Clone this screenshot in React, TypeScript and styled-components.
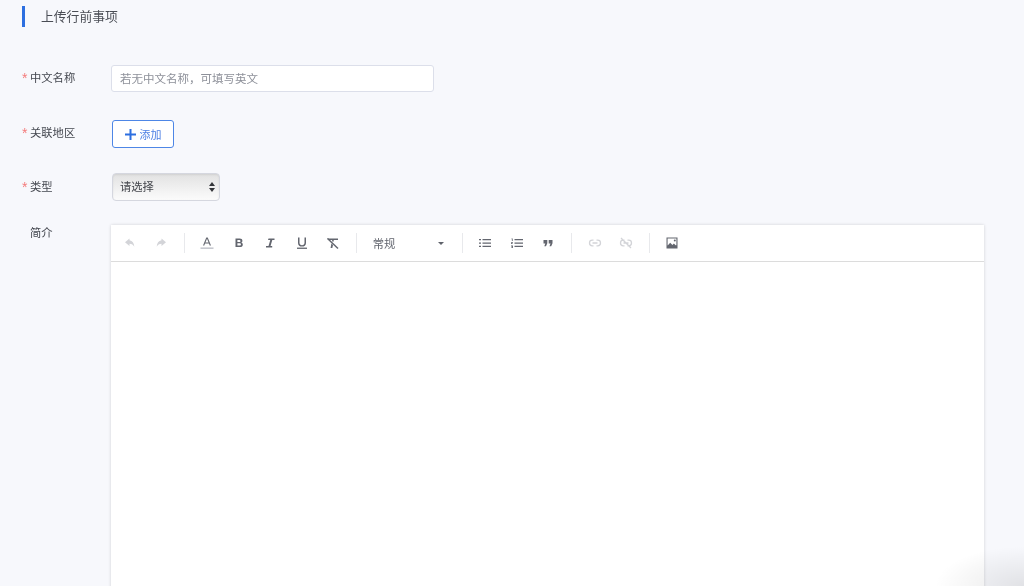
import styled, { createGlobalStyle } from "styled-components";
import { ReactNode } from "react";

const GlobalStyle = createGlobalStyle`
  html, body {
    margin: 0;
    padding: 0;
    height: 100%;
    background: #f7f8fc;
    overflow: hidden;
  }
  body, input, select, button {
    font-family: "Liberation Sans", "Noto Sans CJK SC", sans-serif;
  }
`;

const Page = styled.div`
  position: relative;
  width: 1024px;
  height: 586px;
  box-sizing: border-box;
  padding: 6px 40px 0 22px;
  background: #f7f8fc;
  overflow: hidden;
  filter: blur(0.35px);
`;

const SectionTitle = styled.h2`
  margin: 0 0 38px;
  height: 21px;
  border-left: 3px solid #2d6fe0;
  padding-left: 16px;
  font-size: 12.8px;
  font-weight: 400;
  line-height: 22px;
  color: #4a4d55;
`;

const Row = styled.div<{ $height: number; $mb: number; $lift?: number }>`
  display: flex;
  align-items: center;
  height: ${(p) => p.$height}px;
  margin-bottom: ${(p) => p.$mb}px;
  label {
    padding-bottom: ${(p) => p.$lift ?? 0}px;
  }
`;

const Label = styled.label`
  width: 89px;
  flex-shrink: 0;
  font-size: 11.3px;
  line-height: 16px;
  color: #44474f;
  white-space: nowrap;
`;

const Star = styled.span`
  display: inline-block;
  width: 8px;
  font-size: 14px;
  line-height: 10px;
  vertical-align: -1px;
  color: #f47a7a;
`;

const TextInput = styled.input`
  box-sizing: border-box;
  width: 323px;
  height: 27px;
  padding: 0 8px;
  background: #fff;
  border: 1px solid #dcdfea;
  border-radius: 3px;
  font-size: 11.5px;
  outline: none;
  &::placeholder {
    color: #8d9099;
    opacity: 1;
  }
`;

const AddButton = styled.button`
  display: flex;
  align-items: center;
  justify-content: center;
  gap: 4px;
  box-sizing: border-box;
  width: 62px;
  height: 28px;
  margin-left: 1px;
  padding: 0;
  background: #fff;
  border: 1px solid #4d86e6;
  border-radius: 3px;
  color: #4d80e4;
  font-size: 11px;
`;

const SelectWrap = styled.div`
  position: relative;
  width: 108px;
  height: 28px;
  margin-left: 1px;
`;

const NativeSelect = styled.select`
  appearance: none;
  box-sizing: border-box;
  width: 100%;
  height: 100%;
  padding: 0 7px;
  border: 1px solid #d5d7df;
  border-radius: 4px;
  background: linear-gradient(#e2e2e2, #f4f4f4 70%, #fbfbfb);
  box-shadow: inset 0 1px 2px rgba(0, 0, 0, 0.08);
  color: #44464c;
  font-size: 11.3px;
`;

const SelectArrows = styled.svg`
  position: absolute;
  top: 9px;
  right: 5px;
  pointer-events: none;
`;

const EditorRow = styled.div`
  display: flex;
  align-items: flex-start;
`;

const EditorLabel = styled(Label)`
  padding-left: 8px;
  width: 81px;
`;

const Editor = styled.div`
  flex: 1;
  height: 400px;
  background: #fff;
  box-shadow: 0 0 3px rgba(0, 0, 0, 0.16);
`;

const Toolbar = styled.div`
  display: flex;
  align-items: center;
  box-sizing: border-box;
  height: 37px;
  padding-left: 3px;
  border-bottom: 1px solid #dcdcdc;
`;

const ToolButton = styled.button<{ $muted?: boolean }>`
  display: flex;
  align-items: center;
  justify-content: center;
  width: 31.4px;
  height: 30px;
  padding: 0;
  border: 0;
  background: none;
  color: ${(p) => (p.$muted ? "#d3d4d8" : "#63666f")};
`;

const Separator = styled.span`
  width: 1px;
  height: 20px;
  margin: 0 7px;
  background: #e8e9ec;
`;

const HeadingSelect = styled.div`
  display: flex;
  align-items: center;
  justify-content: space-between;
  box-sizing: border-box;
  width: 91px;
  padding: 0 11px 0 9px;
  font-size: 11.3px;
  color: #63666f;
`;

const Caret = styled.span`
  width: 0;
  height: 0;
  border-left: 3px solid transparent;
  border-right: 3px solid transparent;
  border-top: 3px solid #5f626b;
`;

const CornerShade = styled.div`
  position: absolute;
  right: 0;
  bottom: 0;
  width: 90px;
  height: 40px;
  pointer-events: none;
  background: radial-gradient(ellipse at 100% 100%, rgba(0, 0, 0, 0.09), rgba(0, 0, 0, 0) 70%);
`;

const Icon = ({ children }: { children: ReactNode }) => (
  <svg width="14" height="14" viewBox="0 0 14 14" fill="currentColor">
    {children}
  </svg>
);

const UndoIcon = () => (
  <Icon>
    <path d="M6.500 2.500 2 6.300l4.500 3.800V7.700c2.300 0 3.700.9 4.800 3-.2-3.500-1.900-6-4.800-6.400z" />
  </Icon>
);
const RedoIcon = () => (
  <Icon>
    <path d="M7.500 2.500 12 6.300l-4.500 3.800V7.700c-2.300 0-3.700.9-4.800 3 .2-3.500 1.900-6 4.800-6.400z" />
  </Icon>
);
const ColorIcon = () => (
  <Icon>
    <path d="M6.300 1.500h1.400L11 9.500H9.700L9 7.600H5L4.300 9.500H3zM5.400 6.500h3.200L7 2.800z" />
    <rect x="0.500" y="11.500" width="13" height="1.300" fill="#b9bbc4" />
  </Icon>
);
const BoldIcon = () => (
  <Icon>
    <path
      fillRule="evenodd"
      d="M3.500 2.500h4.200c1.700 0 2.700.9 2.700 2.200 0 .9-.5 1.600-1.200 1.900 1 .3 1.600 1 1.600 2.100 0 1.500-1.100 2.300-2.900 2.300H3.500zM5.400 4v1.900h2c.7 0 1.100-.4 1.100-1s-.4-.9-1.100-.9zM5.400 7.300V9.500h2.300c.8 0 1.200-.4 1.200-1.100s-.4-1.100-1.200-1.100z"
    />
  </Icon>
);
const ItalicIcon = () => (
  <Icon>
    <path d="M5.500 2.500h6v1.600H9.300L7.500 9.900h1.700v1.600H3V9.900h2.500l1.800-5.800H5z" />
  </Icon>
);
const UnderlineIcon = () => (
  <Icon>
    <path d="M3 1.500h1.500v5.300c0 1.600 1 2.400 2.500 2.400s2.500-.8 2.500-2.400V1.500H11v5.400c0 2.400-1.600 3.700-4 3.700s-4-1.300-4-3.700z" />
    <rect x="2" y="11.600" width="10" height="1.300" />
  </Icon>
);
const ClearIcon = () => (
  <Icon>
    <path d="M1 2.500h11V4H7.900l-.7 2L6 4.900 6.300 4H3z" />
    <path d="M2 2 12.500 12l-1 1L1 3z" />
    <path d="M5.400 7.500 7 9l-.7 3H4.600z" />
  </Icon>
);
const BulletIcon = () => (
  <Icon>
    <path d="M1 3h2v1.300H1zM4.500 3H13v1.300H4.500zM1 6.400h2v1.300H1zM4.500 6.400H13v1.300H4.500zM1 9.800h2v1.300H1zM4.500 9.800H13v1.300H4.500z" />
  </Icon>
);
const NumberIcon = () => (
  <Icon>
    <path d="M1.500 2.500h1.200v2.500H1.900V3.300h-.4zM4.500 3H13v1.300H4.500zM1 6.200h2v.8H1.800v.4H3v.6H1zM4.500 6.400H13v1.300H4.500zM1 9.600h2V12H1v-.6h1.200v-.3H1.500v-.5h.7v-.3H1zM4.500 9.800H13v1.300H4.500z" />
  </Icon>
);
const QuoteIcon = () => (
  <Icon>
    <path d="M2.500 4h3.800v3.300L5 10.300H3.300l1-2.800H2.500zM7.700 4h3.800v3.300l-1.300 3H8.500l1-2.800H7.700z" />
  </Icon>
);
const LinkIcon = () => (
  <Icon>
    <path
      fill="none"
      stroke="currentColor"
      strokeWidth="1.300"
      d="M5.500 4.200H4.300a2.800 2.800 0 0 0 0 5.600h1.200M8.500 4.200h1.200a2.800 2.800 0 0 1 0 5.600H8.500M4.500 7h5"
    />
  </Icon>
);
const UnlinkIcon = () => (
  <Icon>
    <path
      fill="none"
      stroke="currentColor"
      strokeWidth="1.300"
      d="M5.500 4.200H4.300a2.800 2.800 0 0 0 0 5.600h1.200M8.500 4.200h1.200a2.800 2.800 0 0 1 0 5.600H8.500M4.500 7h5M2 2l10 10"
    />
  </Icon>
);
const ImageIcon = () => (
  <Icon>
    <path
      fillRule="evenodd"
      d="M1.500 1.500h11v11h-11zM2.600 2.600v6.900l2.600-2.800 2.200 2.300 1.500-1.400 1.700 1.700h.8V2.600z"
    />
    <circle cx="9.800" cy="4.600" r="1" />
  </Icon>
);

export default function App() {
  return (
    <>
      <GlobalStyle />
      <Page>
        <SectionTitle>上传行前事项</SectionTitle>

        <Row $height={27} $mb={28} $lift={2}>
          <Label>
            <Star>*</Star>中文名称
          </Label>
          <TextInput placeholder="若无中文名称，可填写英文" />
        </Row>

        <Row $height={28} $mb={25} $lift={2}>
          <Label>
            <Star>*</Star>关联地区
          </Label>
          <AddButton>
            <svg width="11" height="11" viewBox="0 0 11 11" fill="#2d6fe0">
              <path d="M4.500 0h2v4.500H11v2H6.500V11h-2V6.500H0v-2h4.500z" />
            </svg>
            添加
          </AddButton>
        </Row>

        <Row $height={28} $mb={24}>
          <Label>
            <Star>*</Star>类型
          </Label>
          <SelectWrap>
            <NativeSelect defaultValue="">
              <option value="">请选择</option>
            </NativeSelect>
            <SelectArrows width="6" height="10" viewBox="0 0 6 10" fill="#33353a">
              <path d="M3 0l3 4H0zM3 10L0 6h6z" />
            </SelectArrows>
          </SelectWrap>
        </Row>

        <EditorRow>
          <EditorLabel>简介</EditorLabel>
          <Editor>
            <Toolbar>
              <ToolButton $muted><UndoIcon /></ToolButton>
              <ToolButton $muted><RedoIcon /></ToolButton>
              <Separator />
              <ToolButton><ColorIcon /></ToolButton>
              <ToolButton><BoldIcon /></ToolButton>
              <ToolButton><ItalicIcon /></ToolButton>
              <ToolButton><UnderlineIcon /></ToolButton>
              <ToolButton><ClearIcon /></ToolButton>
              <Separator />
              <HeadingSelect>
                常规
                <Caret />
              </HeadingSelect>
              <Separator />
              <ToolButton><BulletIcon /></ToolButton>
              <ToolButton><NumberIcon /></ToolButton>
              <ToolButton><QuoteIcon /></ToolButton>
              <Separator />
              <ToolButton $muted><LinkIcon /></ToolButton>
              <ToolButton $muted><UnlinkIcon /></ToolButton>
              <Separator />
              <ToolButton><ImageIcon /></ToolButton>
            </Toolbar>
          </Editor>
        </EditorRow>
        <CornerShade />
      </Page>
    </>
  );
}
